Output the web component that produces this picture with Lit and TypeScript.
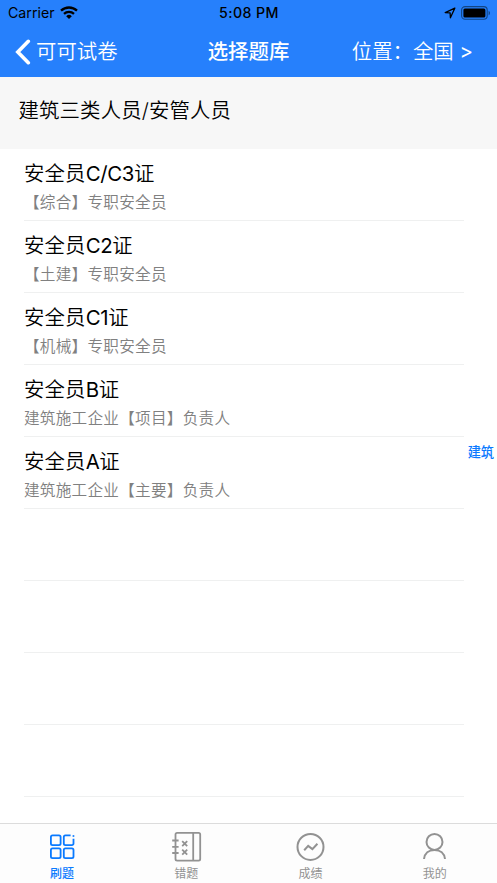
import { LitElement, html, css, svg } from "lit";
import { customElement, property } from "lit/decorators.js";

interface Bank { title: string; note: string }

const banks: Bank[] = [
  { title: "安全员C/C3证", note: "【综合】专职安全员" },
  { title: "安全员C2证", note: "【土建】专职安全员" },
  { title: "安全员C1证", note: "【机械】专职安全员" },
  { title: "安全员B证", note: "建筑施工企业【项目】负责人" },
  { title: "安全员A证", note: "建筑施工企业【主要】负责人" },
];
const blankRows = [0, 1, 2, 3];

// Latin runs are set a little heavier and tighter than the Chinese around them.
const mixed = (text: string) =>
  text.split(/([A-Z0-9/]+)/).map((part, i) => (i % 2 ? html`<span class="latin">${part}</span>` : part));

const icons = {
  grid: svg`<g stroke-width="1.8">
    <rect x="3.900" y="4.400" width="9.700" height="9.700" rx="1.600"/>
    <path d="M23.600 4.400h-5.200a1.600 1.600 0 0 0-1.600 1.600v6.500a1.600 1.600 0 0 0 1.600 1.600h6.500a1.600 1.600 0 0 0 1.600-1.600V7.700"/>
    <path d="M25.600 5h1.700" stroke-width="1.700"/>
    <rect x="3.900" y="17.400" width="9.700" height="9.700" rx="1.600"/>
    <rect x="16.800" y="17.400" width="9.700" height="9.700" rx="1.600"/></g>`,
  book: svg`<g stroke-width="1.800">
    <path d="M6.100 1.800h21.500a1.600 1.600 0 0 1 1.600 1.600v24.600a1.600 1.600 0 0 1-1.600 1.600H6.100A1.600 1.600 0 0 1 4.500 28V3.400A1.600 1.600 0 0 1 6.100 1.800M22.200 1.800v27.800"/>
    <path d="M1.200 9.500h6.400M1.200 15.800h6.400M1.200 22h6.400"/>
    <path d="M11.200 10.200l5 5m0-5l-5 5M11.200 18.700l5 5m0-5l-5 5"/></g>`,
  chart: svg`<g stroke-width="2"><circle cx="15.500" cy="15.900" r="13"/>
    <path d="M9.200 19.200l4-4.300 4.200 3.200 5-5.300" stroke-linejoin="miter"/></g>`,
  person: svg`<g stroke-width="2"><circle cx="15.500" cy="10.900" r="8"/>
    <path d="M5 28c.6-5.600 4.800-9.100 10.500-9.100S25.400 22.400 26 28"/></g>`,
};

const tabs: { label: string; icon: keyof typeof icons }[] = [
  { label: "刷题", icon: "grid" },
  { label: "错题", icon: "book" },
  { label: "成绩", icon: "chart" },
  { label: "我的", icon: "person" },
];

@customElement("status-bar")
class StatusBar extends LitElement {
  static styles = css`
    :host { display: grid; grid-template-columns: 1fr auto 1fr; align-items: center; height: 26px; padding: 0 7px 0 8px; color: #000; font-size: 14.2px; line-height: 26px; }
    .left, .right { display: flex; align-items: center; }
    .left { gap: 5px; }
    .right { justify-content: flex-end; gap: 5px; }
    .time { font-weight: 500; letter-spacing: .4px; }
    svg { display: block; }
    .wifi { margin-top: -2px; }
  `;
  render() {
    return html`
      <div class="left"><span>Carrier</span>
        <svg class="wifi" width="18" height="13" viewBox="0 0 18 13" fill="none" stroke="#000" stroke-width="2.300">
          <path d="M1 4.700a11.600 11.600 0 0 1 16 0M4 7.900a7.300 7.300 0 0 1 10 0"/>
          <path d="M9 13L6.200 10.200a4 4 0 0 1 5.600 0z" fill="#000" stroke="none"/>
        </svg></div>
      <div class="time">5:08 PM</div>
      <div class="right">
        <svg width="12" height="12" viewBox="0 0 12 12" fill="none" stroke="#000" stroke-width="1.300" stroke-linejoin="round"><path d="M10.800 1.200L1.200 5.600l4.900.3.300 4.900z"/></svg>
        <svg width="29" height="14" viewBox="0 0 29 14"><rect x=".6" y=".6" width="25.600" height="12.600" rx="3.500" fill="none" stroke="#124584" stroke-width="1.100"/><rect x="2.400" y="2.400" width="22" height="9" rx="1.500" fill="#000"/><path d="M27.600 4.700c1.800.8 1.800 3.800 0 4.600z" fill="#124584"/></svg>
      </div>`;
  }
}

@customElement("nav-bar")
class NavBar extends LitElement {
  static styles = css`
    :host { display: grid; grid-template-columns: 1fr auto 1fr; align-items: center; height: 51px; color: #fff; font-size: 20.4px; line-height: 30px; font-weight: 350; }
    .back { display: flex; align-items: center; gap: 5px; padding-left: 15px; }
    .title { font-weight: 500; }
    .place { text-align: right; white-space: pre; padding-right: 24px; }
    .more { font-weight: 400; }
    svg { display: block; }
  `;
  render() {
    return html`
      <div class="back"><svg width="16" height="26" viewBox="0 0 16 26" fill="none" stroke="#fff" stroke-width="3.600" stroke-linecap="round" stroke-linejoin="miter"><path d="M13.300 2.300L2.800 13l10.500 10.700"/></svg><span>可可试卷</span></div>
      <div class="title">选择题库</div>
      <div class="place">位置：全国 <span class="more">&gt;</span></div>`;
  }
}

@customElement("bank-row")
class BankRow extends LitElement {
  static styles = css`
    :host { display: block; box-sizing: border-box; height: 72px; padding: 10px 0 0; border-bottom: 1px solid #eff0f0; font-weight: 350; }
    .title { font-size: 20.4px; line-height: 30px; letter-spacing: .15px; color: #000; }
    .latin { font-weight: 400; letter-spacing: -.35px; }
    .note { font-size: 15.6px; line-height: 24px; letter-spacing: .28px; margin-top: 2px; color: #808080; }
  `;
  @property({ attribute: false }) bank?: Bank;
  render() {
    return this.bank
      ? html`<div class="title">${mixed(this.bank.title)}</div><div class="note">${this.bank.note}</div>`
      : html``;
  }
}

@customElement("tab-bar")
class TabBar extends LitElement {
  static styles = css`
    :host { display: grid; grid-template-columns: repeat(4, 1fr); box-sizing: border-box; height: 60px; border-top: 1px solid #dcdcdc; background: #fdfdfd; }
    .tab { display: flex; flex-direction: column; align-items: center; padding-top: 7px; color: #929292; font-size: 12px; line-height: 18px; font-weight: 400; }
    .active { color: #0a7aff; font-weight: 500; }
    svg { display: block; margin-bottom: 3px; overflow: visible; }
  `;
  render() {
    return tabs.map((t, i) => html`<div class="tab ${i === 0 ? "active" : ""}">
      <svg width="31" height="31" viewBox="0 0 31 31" fill="none" stroke="currentColor" stroke-linejoin="round">${icons[t.icon]}</svg>
      <span>${t.label}</span></div>`);
  }
}

@customElement("app-root")
class AppRoot extends LitElement {
  static styles = css`
    :host { display: flex; flex-direction: column; position: relative; height: 883px; overflow: hidden; background: #fff; font-family: Inter, "Noto Sans CJK SC", sans-serif; }
    .top { background: #2680fc; }
    .section { box-sizing: border-box; height: 72px; padding: 19px 18.500px; background: #f7f7f7; font-size: 20.4px; line-height: 30px; letter-spacing: .15px; color: #000; font-weight: 350; }
    .list { flex: 1; min-height: 0; overflow: hidden; padding: 0 33px 0 24px; }
    .index { position: absolute; right: 3px; top: 442px; font-size: 13.2px; line-height: 20px; font-weight: 500; color: #0a7aff; }
  `;
  render() {
    return html`
      <div class="top"><status-bar></status-bar><nav-bar></nav-bar></div>
      <div class="section">建筑三类人员/安管人员</div>
      <div class="list">
        ${banks.map((b) => html`<bank-row .bank=${b}></bank-row>`)}
        ${blankRows.map(() => html`<bank-row></bank-row>`)}
      </div>
      <div class="index">建筑</div>
      <tab-bar></tab-bar>`;
  }
}
